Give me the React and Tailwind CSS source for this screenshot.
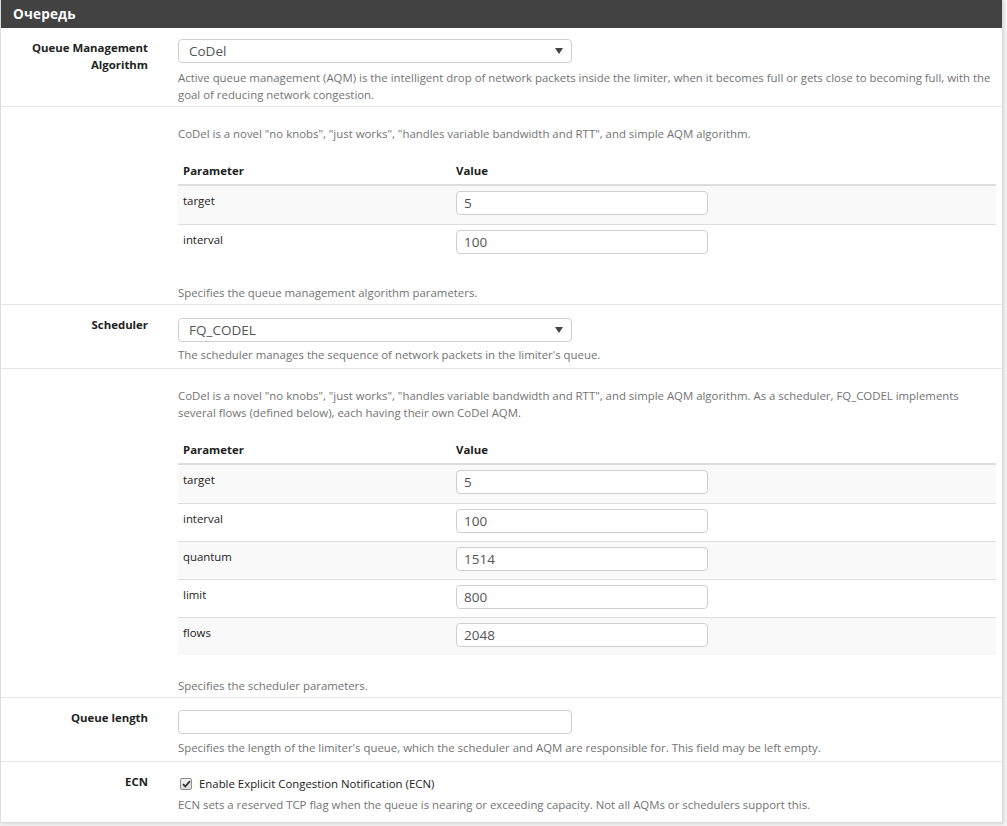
import React from 'react'

const font = { fontFamily: '"Open Sans", "Noto Sans", sans-serif' }

const Select = ({ value }) => (
  <div className='w-[394px] h-[24px] border border-[#cfcfcf] rounded-[4px] bg-white flex items-center justify-between pl-[10px] pr-[8px] text-[13.5px] text-[#555]'>
    <span>{value}</span>
    <svg width='8' height='6' viewBox='0 0 8 6'><path d='M0 0h8L4 6z' fill='#444' /></svg>
  </div>
)

const Input = ({ value, wide }) => (
  <div className={(wide ? 'w-[394px]' : 'w-[252px]') + ' h-[24px] border border-[#cfcfcf] rounded-[4px] bg-white flex items-center pl-[7px] text-[13.5px] text-[#555]'}>
    {value}
  </div>
)

const Help = ({ children, className = '' }) => (
  <div className={'text-[11.4px] leading-[17px] text-[#737373] ' + className}>{children}</div>
)

const Row = ({ label, children, className = '' }) => (
  <div className={'flex border-b border-[#e6e6e6] ' + className}>
    <div className='w-[147px] shrink-0 text-right font-bold text-[11.4px] leading-[17px] text-[#212121] pt-[11px]'>{label}</div>
    <div className='ml-[30px] w-[818px]'>{children}</div>
  </div>
)

const ParamTable = ({ rows }) => (
  <div className='mt-[15px] w-[818px] text-[11.4px] text-[#212121]'>
    <div className='flex h-[29px] items-center border-b-2 border-[#ddd] font-bold'>
      <div className='w-[273px] pl-[5px]'>Parameter</div>
      <div className='pl-[5px]'>Value</div>
    </div>
    {rows.map(([name, val], i) => (
      <div key={name} className={'flex h-[38px] ' + (i > 0 ? 'border-t border-[#ddd] ' : '') + (i % 2 === 0 ? 'bg-[#f9f9f9]' : 'bg-white')}>
        <div className='w-[273px] pl-[5px] pt-[6px] leading-[17px]'>{name}</div>
        <div className='pl-[5px] pt-[5px]'><Input value={val} /></div>
      </div>
    ))}
  </div>
)

export default function App() {
  return (
    <div style={font} className='w-[1007px] h-[826px] bg-[#f4f4f4]'>
      <div className='w-[1003px] bg-white border-x border-b border-[#dcdcdc] shadow-[1px_1px_3px_rgba(0,0,0,0.12)]'>
        <div className='h-[28px] bg-[#424242] flex items-center pl-[12px] text-white font-bold text-[13.5px] tracking-[0.2px]'>Очередь</div>

        <Row label={<>Queue Management<br />Algorithm</>} className='h-[79px]'>
          <div className='pt-[11px]'>
            <Select value='CoDel' />
            <Help className='mt-[6px]'>Active queue management (AQM) is the intelligent drop of network packets inside the limiter, when it becomes full or gets close to becoming full, with the goal of reducing network congestion.</Help>
          </div>
        </Row>

        <Row label='' className='h-[198px]'>
          <Help className='mt-[18px]'>CoDel is a novel "no knobs", "just works", "handles variable bandwidth and RTT", and simple AQM algorithm.</Help>
          <ParamTable rows={[['target', '5'], ['interval', '100']]} />
          <Help className='mt-[22px]'>Specifies the queue management algorithm parameters.</Help>
        </Row>

        <Row label='Scheduler' className='h-[64px]'>
          <div className='pt-[13px]'>
            <Select value='FQ_CODEL' />
            <Help className='mt-[4px]'>The scheduler manages the sequence of network packets in the limiter's queue.</Help>
          </div>
        </Row>

        <Row label='' className='h-[329px]'>
          <Help className='mt-[18px]'>CoDel is a novel "no knobs", "just works", "handles variable bandwidth and RTT", and simple AQM algorithm. As a scheduler, FQ_CODEL implements several flows (defined below), each having their own CoDel AQM.</Help>
          <ParamTable rows={[['target', '5'], ['interval', '100'], ['quantum', '1514'], ['limit', '800'], ['flows', '2048']]} />
          <Help className='mt-[22px]'>Specifies the scheduler parameters.</Help>
        </Row>

        <Row label='Queue length' className='h-[64px]'>
          <div className='pt-[12px]'>
            <Input value='' wide />
            <Help className='mt-[5px]'>Specifies the length of the limiter's queue, which the scheduler and AQM are responsible for. This field may be left empty.</Help>
          </div>
        </Row>

        <Row label='ECN' className='h-[60px] border-b-0'>
          <div className='pt-[13px]'>
            <div className='flex items-center h-[17px] text-[11.4px] text-[#212121]'>
              <span className='ml-[2px] w-[12px] h-[12px] border border-[#8f8f8f] rounded-[2px] bg-gradient-to-b from-[#f4f4f4] to-[#dcdcdc] flex items-center justify-center'>
                <svg width='9' height='8' viewBox='0 0 9 8'><path d='M1 4.2l2.3 2.3L8 1.2' stroke='#333' strokeWidth='1.8' fill='none' /></svg>
              </span>
              <span className='ml-[7px]'>Enable Explicit Congestion Notification (ECN)</span>
            </div>
            <Help className='mt-[4px]'>ECN sets a reserved TCP flag when the queue is nearing or exceeding capacity. Not all AQMs or schedulers support this.</Help>
          </div>
        </Row>
      </div>
    </div>
  )
}
